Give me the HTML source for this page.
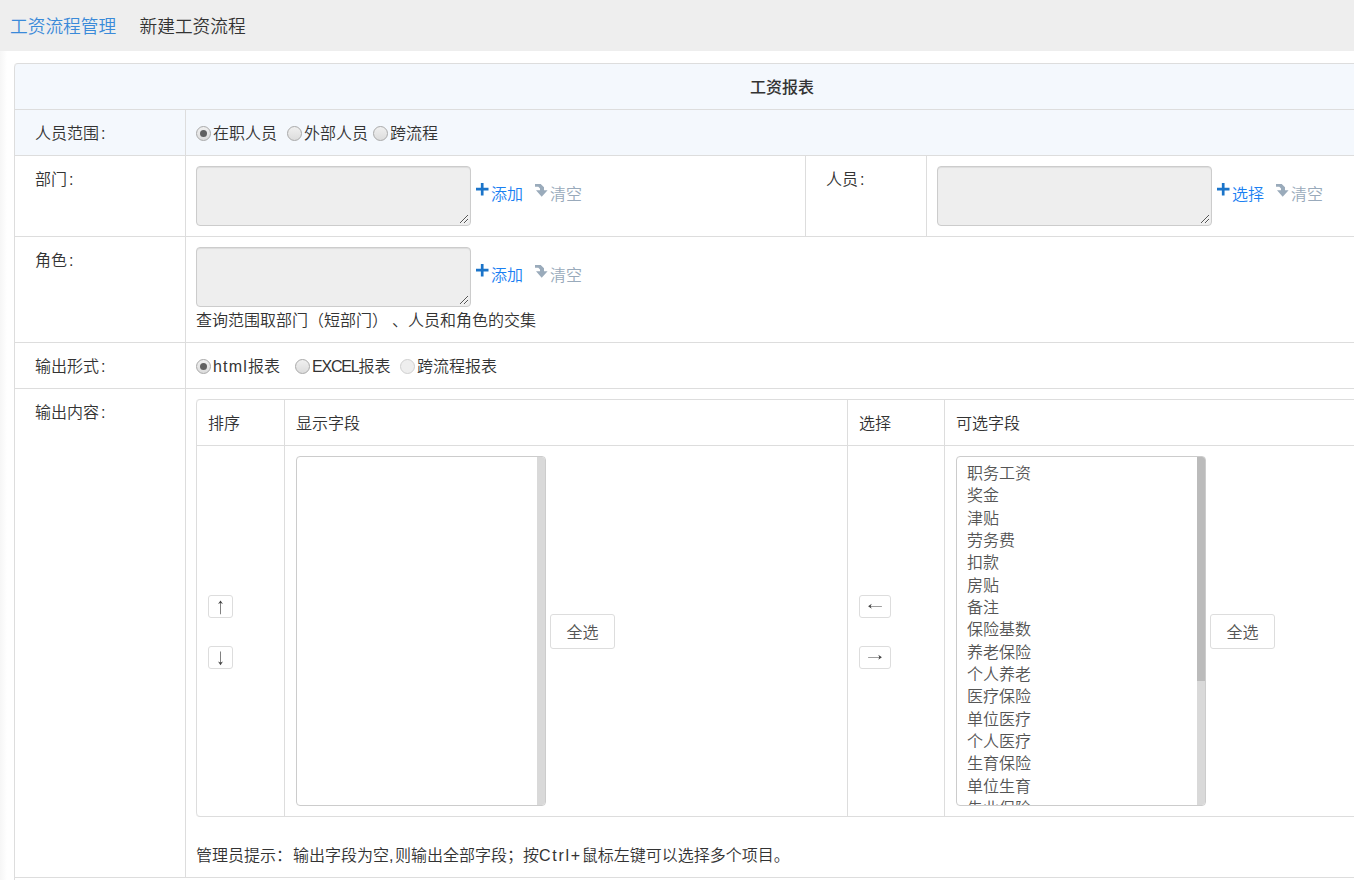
<!DOCTYPE html>
<html lang="zh-CN">
<head>
<meta charset="utf-8">
<title>工资报表</title>
<style>
*{box-sizing:border-box;}
html,body{margin:0;padding:0;}
body{width:1354px;height:880px;overflow:hidden;background:#fff;position:relative;
 font-family:"Liberation Sans","Noto Sans CJK SC",sans-serif;font-size:16px;line-height:25px;color:#333;font-weight:350;text-spacing-trim:space-all;}
.edge{position:absolute;left:0;top:51px;width:7px;height:829px;background:linear-gradient(to right,#f6f6f6,#fff);}
.top{position:absolute;left:0;top:0;width:1354px;height:51px;background:#eee;font-size:17.7px;line-height:25px;}
.top a{position:absolute;left:10px;top:15px;color:#3a8ad9;text-decoration:none;white-space:nowrap;}
.top span{position:absolute;left:139.5px;top:15px;color:#333;white-space:nowrap;}
table{border-collapse:separate;border-spacing:0;table-layout:fixed;}
.main{position:absolute;left:14px;top:63px;width:1536px;border:1px solid #ddd;border-left:0;border-radius:4px;}
.main>tbody>tr>td{border-left:1px solid #ddd;border-top:1px solid #ddd;padding:11px 10px 9px;vertical-align:top;height:46px;}
.main>tbody>tr:first-child>td{border-top:0;height:45px;}
.main>tbody>tr>td.lb{padding-left:20px;}
.main>tbody>tr.hd>td{background:#f4f8fd;}
.main>tbody>tr:first-child>td{border-top-left-radius:4px;border-top-right-radius:4px;}
td.title{text-align:center;font-weight:500;}
.rad{display:inline-block;width:15px;height:15px;border-radius:50%;border:1px solid #a9a9a9;background:linear-gradient(#f0f0f0,#dcdcdc);vertical-align:top;margin:5px 2px 0 0;position:relative;}
.rad.on::after{content:"";position:absolute;left:3px;top:3px;width:7px;height:7px;border-radius:50%;background:#606060;}
.rad.dis{border-color:#d0d0d0;background:#eee;}
.rl{display:inline-block;vertical-align:top;}
.ta{display:block;width:275px;height:60px;border:1px solid #ccc;border-radius:4px;background:#eee;box-shadow:inset 0 1px 1px rgba(0,0,0,.075);position:relative;}
.ta svg{position:absolute;}
.co{margin-left:2px;}
.fx{display:flex;align-items:flex-start;height:60px;margin:-1px 0 1px;}
.lk{position:relative;height:25px;margin-top:16px;white-space:nowrap;}
.lk a{position:absolute;top:0;text-decoration:none;}
.lk a.b{color:#1a80f2;}
.lk a.g{color:#99aabb;}
.lk svg{position:absolute;}
.inner{width:1343px;border:1px solid #ddd;border-left:0;border-radius:4px;margin:-1px 0 26px 0;}
.inner td{border-left:1px solid #ddd;border-top:1px solid #ddd;padding:10px 10px 10px 11px;vertical-align:middle;}
.inner tr:first-child td{padding:11px 10px 9px 11px;}
.inner tr:first-child td{border-top:0;height:45px;}
.inner tr:first-child td:first-child{border-top-left-radius:4px;}
.inner tr:last-child td:first-child{border-bottom-left-radius:4px;}
.sel{display:inline-block;vertical-align:middle;width:250px;height:350px;border:1px solid #ccc;border-radius:4px;background:#fff;position:relative;overflow:hidden;}
.sel .track{position:absolute;right:0;top:0;width:8px;height:348px;background:#d9d9d9;}
.sel .thumb{position:absolute;right:0;top:0;width:8px;height:224px;background:#bbb;}
.sel .opts{position:absolute;left:0;top:6px;width:240px;color:#555;}
.sel .opts div{height:22.33px;line-height:22.33px;padding-left:10px;white-space:nowrap;}
.btn{display:inline-block;vertical-align:middle;border:1px solid #ddd;border-radius:3px;background:#fff;color:#555;text-align:center;}
.btn.all{width:65px;height:35px;line-height:35px;margin-left:4px;position:relative;top:.5px;}
.btn.ar{display:block;height:23px;line-height:21px;font-size:16px;padding:0;position:relative;top:1px;font-family:"WenQuanYi Zen Hei",sans-serif;color:#444;}
.btn.v{width:25px;line-height:25px;}
.btn.h{width:32px;line-height:23px;}
</style>
</head>
<body>
<div class="top"><a>工资流程管理</a><span>新建工资流程</span></div>
<div class="edge"></div>
<table class="main">
<colgroup><col style="width:171px"><col style="width:620px"><col style="width:121px"><col></colgroup>
<tbody>
<tr class="hd"><td colspan="4" class="title">工资报表</td></tr>
<tr class="hd"><td class="lb">人员范围<span class="co">:</span></td><td colspan="3"><span class="rad on"></span><span class="rl" style="margin-right:10px">在职人员</span><span class="rad"></span><span class="rl" style="margin-right:5px">外部人员</span><span class="rad"></span><span class="rl">跨流程</span></td></tr>
<tr><td class="lb">部门<span class="co">:</span></td><td><div class="fx"><span class="ta"><svg width="12" height="12" style="left:261px;top:46px"><path d="M2 10L10 2M6 10L10 6" stroke="#555" stroke-width="1" fill="none"/><path d="M3 10L10 3M7 10L10 7" stroke="#fafafa" stroke-width="1" fill="none"/></svg></span><div class="lk"><svg width="13" height="13" style="left:5px;top:1px"><path d="M0 6.2h12.5M6.2 0v12.5" stroke="#1b74c9" stroke-width="2.7" fill="none"/></svg><svg width="13" height="13" style="left:64px;top:2px"><path d="M0 0H5.7L9 3.3V6.3H12.6L6.7 12.8L1 6.3H5V4.5L3.3 2.8H0Z" fill="#9aabbb"/></svg><a class="b" style="left:20px">添加</a><a class="g" style="left:79px">清空</a></div></div></td><td class="lb">人员<span class="co">:</span></td><td><div class="fx"><span class="ta"><svg width="12" height="12" style="left:261px;top:46px"><path d="M2 10L10 2M6 10L10 6" stroke="#555" stroke-width="1" fill="none"/><path d="M3 10L10 3M7 10L10 7" stroke="#fafafa" stroke-width="1" fill="none"/></svg></span><div class="lk"><svg width="13" height="13" style="left:5px;top:1px"><path d="M0 6.2h12.5M6.2 0v12.5" stroke="#1b74c9" stroke-width="2.7" fill="none"/></svg><svg width="13" height="13" style="left:64px;top:2px"><path d="M0 0H5.7L9 3.3V6.3H12.6L6.7 12.8L1 6.3H5V4.5L3.3 2.8H0Z" fill="#9aabbb"/></svg><a class="b" style="left:20px">选择</a><a class="g" style="left:79px">清空</a></div></div></td></tr>
<tr><td class="lb">角色<span class="co">:</span></td><td colspan="3"><div class="fx"><span class="ta"><svg width="12" height="12" style="left:261px;top:46px"><path d="M2 10L10 2M6 10L10 6" stroke="#555" stroke-width="1" fill="none"/><path d="M3 10L10 3M7 10L10 7" stroke="#fafafa" stroke-width="1" fill="none"/></svg></span><div class="lk"><svg width="13" height="13" style="left:5px;top:1px"><path d="M0 6.2h12.5M6.2 0v12.5" stroke="#1b74c9" stroke-width="2.7" fill="none"/></svg><svg width="13" height="13" style="left:64px;top:2px"><path d="M0 0H5.7L9 3.3V6.3H12.6L6.7 12.8L1 6.3H5V4.5L3.3 2.8H0Z" fill="#9aabbb"/></svg><a class="b" style="left:20px">添加</a><a class="g" style="left:79px">清空</a></div></div><div>查询范围取部门（短部门）<span style="margin-left:4px">、</span>人员和角色的交集</div></td></tr>
<tr><td class="lb">输出形式<span class="co">:</span></td><td colspan="3"><span class="rad on"></span><span class="rl" style="width:82px"><span style="letter-spacing:1.2px">html</span>报表</span><span class="rad"></span><span class="rl" style="width:88px"><span style="letter-spacing:-1.2px">EXCEL</span>报表</span><span class="rad dis"></span><span class="rl">跨流程报表</span></td></tr>
<tr><td class="lb">输出内容<span class="co">:</span></td><td colspan="3">
<table class="inner">
<colgroup><col style="width:88px"><col style="width:563px"><col style="width:97px"><col></colgroup>
<tbody>
<tr><td>排序</td><td>显示字段</td><td>选择</td><td>可选字段</td></tr>
<tr><td style="height:371px"><span class="btn ar v" style="margin-bottom:28px">↑</span><span class="btn ar v">↓</span></td>
<td><span class="sel"><span class="track"></span></span><span class="btn all">全选</span></td>
<td><span class="btn ar h" style="margin-bottom:28px">←</span><span class="btn ar h">→</span></td>
<td><span class="sel"><span class="opts"><div>职务工资</div><div>奖金</div><div>津贴</div><div>劳务费</div><div>扣款</div><div>房贴</div><div>备注</div><div>保险基数</div><div>养老保险</div><div>个人养老</div><div>医疗保险</div><div>单位医疗</div><div>个人医疗</div><div>生育保险</div><div>单位生育</div><div>失业保险</div><div>单位失业</div></span><span class="track"></span><span class="thumb"></span></span><span class="btn all">全选</span></td></tr>
</tbody></table>
<div>管理员提示：<span style="margin-left:1px">输出字段为空</span><span style="margin-right:1.5px">,</span>则输出全部字段；按<span style="letter-spacing:1.7px">Ctrl+</span>鼠标左键可以选择多个项目。</div>
</td></tr>
<tr><td colspan="4">&nbsp;</td></tr>
</tbody>
</table>
</body>
</html>
